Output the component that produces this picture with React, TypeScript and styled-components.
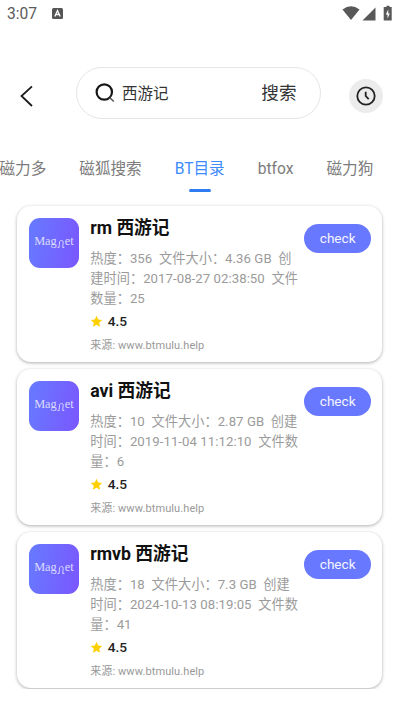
import React from "react";
import styled, { createGlobalStyle } from "styled-components";

const GlobalStyle = createGlobalStyle`
  * { box-sizing: border-box; }
  body {
    margin: 0;
    background: #fff;
    font-family: Roboto, "Noto Sans CJK SC", sans-serif;
    overflow: hidden;
  }
`;

const Screen = styled.div`
  width: 400px;
  height: 711px;
  background: #fff;
  display: flex;
  flex-direction: column;
  overflow: hidden;
`;

const StatusBar = styled.header`
  height: 28px;
  flex: none;
  display: flex;
  align-items: center;
  padding: 0 5px 0 7px;
  color: #555;
`;

const Time = styled.span`
  font-size: 15.6px;
  line-height: 28px;
  width: 45px;
  color: #5a5a5a;
`;

const StatusIcons = styled.div`
  margin-left: auto;
  display: flex;
  align-items: center;
`;

const Header = styled.div`
  height: 52px;
  margin-top: 39px;
  flex: none;
  display: flex;
  align-items: center;
`;

const BackButton = styled.button`
  width: 75.5px;
  height: 52px;
  border: 0;
  padding: 6px 0 0 19px;
  background: none;
  display: flex;
  align-items: center;
`;

const SearchBox = styled.div`
  width: 245.5px;
  height: 52px;
  border: 1.5px solid #e6e6e8;
  border-radius: 26px;
  display: flex;
  align-items: center;
  padding: 0 23.5px 0 18px;
  color: #333;
`;

const Query = styled.span`
  font-size: 15.5px;
  line-height: 24px;
  margin: 1px 0 0 6.5px;
  flex: 1;
`;

const SearchAction = styled.span`
  font-size: 17.6px;
  line-height: 24px;
`;

const HistoryButton = styled.button`
  width: 34px;
  height: 34px;
  margin: 6px 0 0 28px;
  padding: 0;
  border: 0;
  border-radius: 50%;
  background: #ececec;
  display: flex;
  align-items: center;
  justify-content: center;
`;

const Tabs = styled.nav`
  height: 82px;
  flex: none;
  display: flex;
  padding-top: 38px;
  gap: 33px;
  margin-left: -0.5px;
`;

const Tab = styled.div<{ $active?: boolean }>`
  display: flex;
  flex-direction: column;
  align-items: center;
  flex: none;
  font-size: 15.6px;
  line-height: 24px;
  white-space: nowrap;
  color: ${(p) => (p.$active ? "#3d8bfd" : "#7c7c7c")};
  &::after {
    content: "";
    width: 22px;
    height: 3px;
    margin-top: 7.5px;
    border-radius: 2px;
    background: ${(p) => (p.$active ? "#2f7bf2" : "transparent")};
  }
`;

const Results = styled.main`
  height: 488px;
  flex: none;
  padding: 5px 18px 0 17.4px;
  display: flex;
  flex-direction: column;
  gap: 7px;
  overflow: hidden;
`;

const Card = styled.article`
  height: 156px;
  flex: none;
  border-radius: 14px;
  background: #fff;
  box-shadow: 0 1px 3.5px rgba(0, 0, 0, 0.32);
  display: flex;
  padding: 12px 11px 0 11.5px;
`;

const Logo = styled.div`
  width: 50px;
  height: 50px;
  flex: none;
  border-radius: 11px;
  background: linear-gradient(100deg, #667bff, #7b56ff);
  color: #dcdcff;
  font-family: "Liberation Serif", serif;
  font-size: 12.3px;
  display: flex;
  align-items: center;
  justify-content: center;
  line-height: 16px;
  padding-bottom: 4px;
`;

const Mark = styled.svg`
  width: 8px;
  height: 10px;
  margin-top: 5px;
`;

const Details = styled.div`
  width: 214px;
  margin-left: 11.3px;
  flex: none;
  white-space: nowrap;
`;

const Title = styled.h2`
  margin: -3px 0 8px;
  font-size: 17.7px;
  line-height: 26px;
  font-weight: 700;
  color: #111;
`;

const MetaLine = styled.div`
  font-size: 13.2px;
  line-height: 20px;
  letter-spacing: 0.05px;
  color: #9b9b9b;
  white-space: pre;
`;

const Rating = styled.div`
  display: flex;
  align-items: center;
  height: 20px;
  margin-top: 3px;
  gap: 4.500px;
  font-size: 13.7px;
  line-height: 18px;
  padding-bottom: 2px;
  font-weight: 500;
  color: #222;
`;

const Source = styled.div`
  font-size: 11px;
  line-height: 16px;
  margin-top: 6px;
  letter-spacing: 0.1px;
  color: #999;
`;

const CheckButton = styled.button`
  width: 67px;
  height: 29px;
  margin-top: 6px;
  flex: none;
  padding: 0;
  border: 0;
  border-radius: 15px;
  background: #6878ff;
  color: #f5f5ff;
  font: 400 13.6px/29px Roboto, sans-serif;
`;

type Result = { title: string; lines: string[] };

const results: Result[] = [
  {
    title: "rm 西游记",
    lines: [
      "热度：356  文件大小：4.36 GB  创",
      "建时间：2017-08-27 02:38:50  文件",
      "数量：25",
    ],
  },
  {
    title: "avi 西游记",
    lines: [
      "热度：10  文件大小：2.87 GB  创建",
      "时间：2019-11-04 11:12:10  文件数",
      "量：6",
    ],
  },
  {
    title: "rmvb 西游记",
    lines: [
      "热度：18  文件大小：7.3 GB  创建",
      "时间：2024-10-13 08:19:05  文件数",
      "量：41",
    ],
  },
];

const tabs = ["磁力多", "磁狐搜索", "BT目录", "btfox", "磁力狗"];

// A small horseshoe magnet stands in for the "n" of the wordmark.
function MagnetMark() {
  return (
    <Mark viewBox="0 0 8 10" fill="none" stroke="#dcdcff" strokeWidth="0.9">
      <path d="M0.500 8.500H2.100L2.600 2.500C3.600 1 6.200 1.200 6.200 3L5.700 8.500H7.300" />
    </Mark>
  );
}

function ResultCard({ title, lines }: Result) {
  return (
    <Card>
      <Logo>
        <span>Mag</span>
        <MagnetMark />
        <span>et</span>
      </Logo>
      <Details>
        <Title>{title}</Title>
        {lines.map((text) => (
          <MetaLine key={text}>{text}</MetaLine>
        ))}
        <Rating>
          <svg width="13" height="13" viewBox="0 0 24 24" fill="#ffd000">
            <path d="M12 1.500l3.100 7 7.600.7-5.800 5 1.800 7.500L12 17.800l-6.700 3.900 1.800-7.500-5.800-5 7.600-.7z" />
          </svg>
          4.5
        </Rating>
        <Source>来源: www.btmulu.help</Source>
      </Details>
      <CheckButton>check</CheckButton>
    </Card>
  );
}

export default function App() {
  return (
    <Screen>
      <GlobalStyle />
      <StatusBar>
        <Time>3:07</Time>
        <svg width="11" height="12" viewBox="0 0 11 12">
          <rect x="0" y="0" width="11" height="11" rx="1.500" fill="#555" />
          <path d="M2.800 8.500L5.500 2.500 8.200 8.500M3.800 6.500h3.400" fill="none" stroke="#fff" strokeWidth="1.300" />
        </svg>
        <StatusIcons>
          <svg width="53" height="18" viewBox="0 0 53 18" fill="#585858">
            <path d="M0.500 4.500Q9-2 17.500 4.500L9 15z" />
            <path d="M33.500 2.500V15.500H20.500z" />
            <path d="M44.500 0.800h3v1.200h2.200V15.500h-8V2h2.800z" />
            <path d="M46.300 4.500l-2.500 5h1.700v4l2.300-5h-1.500z" fill="#fff" />
          </svg>
        </StatusIcons>
      </StatusBar>
      <Header>
        <BackButton aria-label="返回">
          <svg width="16" height="24" viewBox="0 0 16 24" fill="none" stroke="#1c1c1c" strokeWidth="1.800">
            <path d="M13 2.300L2.500 12 13 22" />
          </svg>
        </BackButton>
        <SearchBox>
          <svg width="21" height="22" viewBox="0 0 21 22" fill="none">
            <circle cx="9.300" cy="10" r="7.700" stroke="#171717" strokeWidth="2.200" />
            <path d="M14.500 15.500l4.300 4" stroke="#555" strokeWidth="1.600" />
          </svg>
          <Query>西游记</Query>
          <SearchAction>搜索</SearchAction>
        </SearchBox>
        <HistoryButton aria-label="历史">
          <svg width="20" height="20" viewBox="0 0 20 20" fill="none" stroke="#222" strokeWidth="1.800">
            <circle cx="10" cy="10" r="8.700" />
            <path d="M9.700 5.800V10l3 3.200" />
          </svg>
        </HistoryButton>
      </Header>
      <Tabs>
        {tabs.map((name) => (
          <Tab key={name} $active={name === "BT目录"}>{name}</Tab>
        ))}
      </Tabs>
      <Results>
        {results.map((r) => (
          <ResultCard key={r.title} {...r} />
        ))}
      </Results>
    </Screen>
  );
}
